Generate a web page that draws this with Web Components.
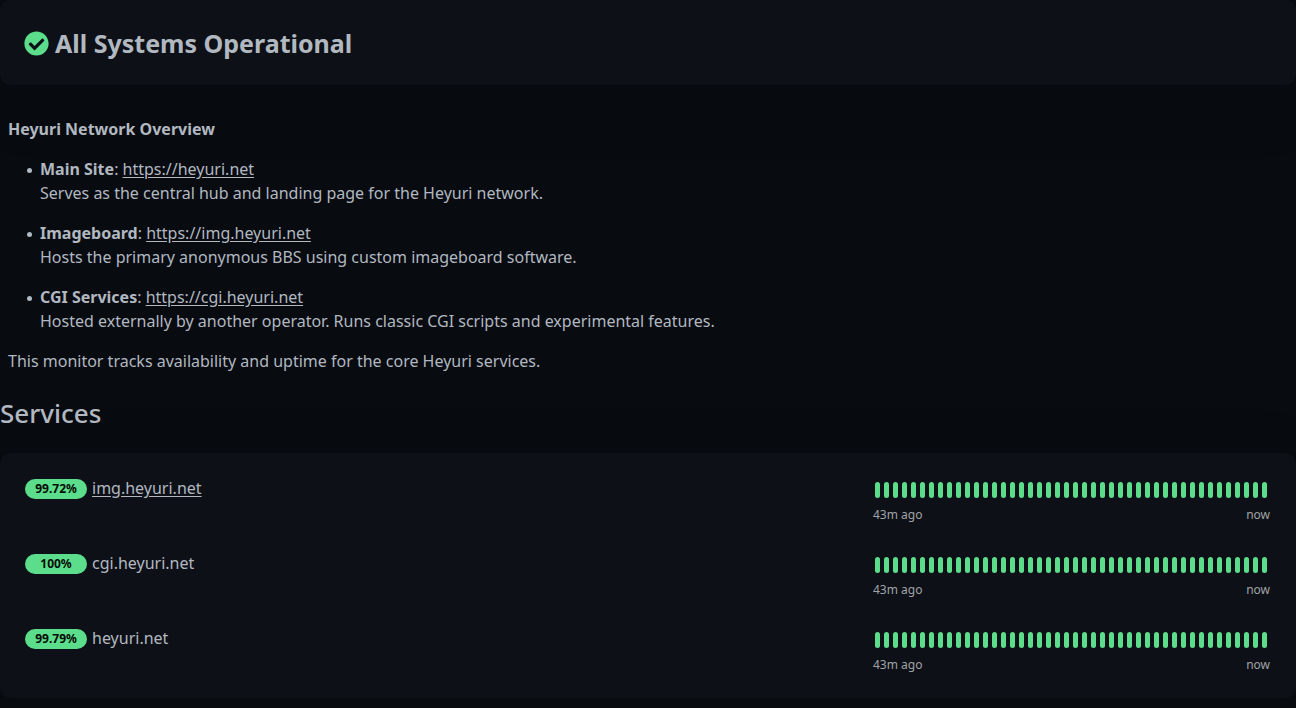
<!DOCTYPE html>
<html lang="en">
<head>
<meta charset="UTF-8">
<meta name="viewport" content="width=device-width, initial-scale=1">
<title>Heyuri Status</title>
<style>
    :root {
        --color-background: #080b10;
        --color-card: #0d1117;
        --color-text: #b1b8c0;
        --color-muted: #a0a3a6;
        --color-primary: #5cdd8b;
        --shadow-card: 0 15px 70px rgba(0, 0, 0, .1);
    }

    body {
        margin: 0;
        background-color: var(--color-background);
        color: var(--color-text);
        font-family: "Noto Sans", "Liberation Sans", sans-serif;
        font-size: 16px;
        line-height: 24px;
        text-underline-offset: 2px;
    }
</style>
</head>
<body>
<status-page></status-page>

<script>
class StatusBanner extends HTMLElement {
    constructor() {
        super();
        this.attachShadow({ mode: 'open' });
    }

    connectedCallback() {
        this.shadowRoot.innerHTML = `
        <style>
        :host {
            display: flex;
            align-items: center;
            gap: 6px;
            padding: 25px 24px 23px;
            border-radius: 10px;
            background-color: var(--color-card);
            box-shadow: var(--shadow-card);
        }

        svg {
            width: 25px;
            height: 25px;
            fill: var(--color-primary);
        }

        h1 {
            margin: 0;
            font-size: 25px;
            font-weight: 700;
            line-height: 37px;
        }
        </style>
        <svg viewBox="0 0 512 512" aria-hidden="true">
            <path d="M504 256c0 137-111 248-248 248S8 393 8 256 119 8 256 8s248 111 248 248zM227.300 387.300l184-184c6.200-6.200 6.200-16.400 0-22.600l-22.600-22.600c-6.200-6.200-16.400-6.200-22.600 0L216 308.100l-70.100-70.100c-6.200-6.200-16.400-6.200-22.600 0l-22.600 22.600c-6.200 6.200-6.200 16.400 0 22.600l104 104c6.200 6.200 16.400 6.200 22.600.1z"/>
        </svg>
        <h1><slot></slot></h1>
        `;
    }
}

class NetworkOverview extends HTMLElement {
    constructor() {
        super();
        this.attachShadow({ mode: 'open' });
    }

    generateSites() {
        const sites = [
            { name: 'Main Site', href: 'https://heyuri.net', text: 'Serves as the central hub and landing page for the Heyuri network.' },
            { name: 'Imageboard', href: 'https://img.heyuri.net', text: 'Hosts the primary anonymous BBS using custom imageboard software.' },
            { name: 'CGI Services', href: 'https://cgi.heyuri.net', text: 'Hosted externally by another operator. Runs classic CGI scripts and experimental features.' }
        ];

        let sitesHTML = '';

        for (let site of sites) {
            sitesHTML += `<li><p><strong>${site.name}</strong>: <a href="${site.href}">${site.href}</a><br>${site.text}</p></li>`;
        }

        return sitesHTML;
    }

    connectedCallback() {
        this.shadowRoot.innerHTML = `
        <style>
        :host {
            display: block;
            padding: 0 8px;
        }

        p {
            margin: 0 0 16px;
        }

        ul {
            margin: 0;
            padding-left: 19px;
            list-style: none;
        }

        li {
            display: flex;
            gap: 8px;
        }

        li::before {
            flex: none;
            width: 5px;
            height: 5px;
            margin-top: 11px;
            border-radius: 50%;
            background-color: currentColor;
            content: '';
        }

        strong {
            font-weight: 700;
        }

        a {
            color: inherit;
        }
        </style>
        <p><strong>Heyuri Network Overview</strong></p>
        <ul>${this.generateSites()}</ul>
        <p>This monitor tracks availability and uptime for the core Heyuri services.</p>
        `;
    }
}

class HeartbeatBar extends HTMLElement {
    constructor() {
        super();
        this.attachShadow({ mode: 'open' });
    }

    connectedCallback() {
        const beats = Number(this.getAttribute('beats'));

        this.shadowRoot.innerHTML = `
        <style>
        :host {
            display: block;
        }

        .beats {
            display: flex;
            gap: 4px;
            padding: 4px 2px;
        }

        .beat {
            width: 5px;
            height: 16px;
            border-radius: 3px;
            background-color: var(--color-primary);
        }

        .labels {
            display: flex;
            justify-content: space-between;
            margin-top: 4px;
            color: var(--color-muted);
            font-size: 12px;
            line-height: 18px;
        }
        </style>
        <div class="beats">${'<div class="beat"></div>'.repeat(beats)}</div>
        <div class="labels"><span>${this.getAttribute('since')}</span><span>now</span></div>
        `;
    }
}

class ServiceItem extends HTMLElement {
    constructor() {
        super();
        this.attachShadow({ mode: 'open' });
    }

    connectedCallback() {
        this.shadowRoot.innerHTML = `
        <style>
        :host {
            display: flex;
            justify-content: space-between;
            align-items: flex-start;
            padding: 13px 16px 14px 15px;
        }

        .info {
            display: flex;
            align-items: center;
            gap: 5px;
        }

        .badge {
            width: 62px;
            margin-top: 2px;
            border-radius: 10px;
            background-color: var(--color-primary);
            color: #020b05;
            font-size: 12px;
            font-weight: 700;
            line-height: 20px;
            text-align: center;
        }

        heartbeat-bar {
            width: 397px;
            padding-top: 2px;
        }
        </style>
        <div class="info">
            <span class="badge">${this.getAttribute('uptime')}</span>
            <slot></slot>
        </div>
        <heartbeat-bar beats="44" since="43m ago"></heartbeat-bar>
        `;
    }
}

class ServiceList extends HTMLElement {
    constructor() {
        super();
        this.attachShadow({ mode: 'open' });
    }

    generateServices() {
        const services = [
            { name: 'img.heyuri.net', uptime: '99.72%', href: 'https://img.heyuri.net' },
            { name: 'cgi.heyuri.net', uptime: '100%' },
            { name: 'heyuri.net', uptime: '99.79%' }
        ];

        let servicesHTML = '';

        for (let service of services) {
            const name = service.href ? `<a href="${service.href}">${service.name}</a>` : `<span>${service.name}</span>`;
            servicesHTML += `<service-item uptime="${service.uptime}">${name}</service-item>`;
        }

        return servicesHTML;
    }

    connectedCallback() {
        this.shadowRoot.innerHTML = `
        <style>
        :host {
            display: block;
        }

        h2 {
            margin: 0 0 24px;
            font-size: 26px;
            font-weight: 500;
            line-height: 31px;
        }

        .card {
            padding: 10px;
            border-radius: 10px;
            background-color: var(--color-card);
            box-shadow: var(--shadow-card);
        }

        a {
            color: inherit;
        }
        </style>
        <h2>Services</h2>
        <div class="card">${this.generateServices()}</div>
        `;
    }
}

class StatusPage extends HTMLElement {
    constructor() {
        super();
        this.attachShadow({ mode: 'open' });
    }

    connectedCallback() {
        this.shadowRoot.innerHTML = `
        <style>
        :host {
            display: block;
        }

        network-overview {
            margin: 32px 0 25px;
        }
        </style>
        <status-banner>All Systems Operational</status-banner>
        <network-overview></network-overview>
        <service-list></service-list>
        `;
    }
}

customElements.define('status-banner', StatusBanner);
customElements.define('network-overview', NetworkOverview);
customElements.define('heartbeat-bar', HeartbeatBar);
customElements.define('service-item', ServiceItem);
customElements.define('service-list', ServiceList);
customElements.define('status-page', StatusPage);
</script>
</body>
</html>
